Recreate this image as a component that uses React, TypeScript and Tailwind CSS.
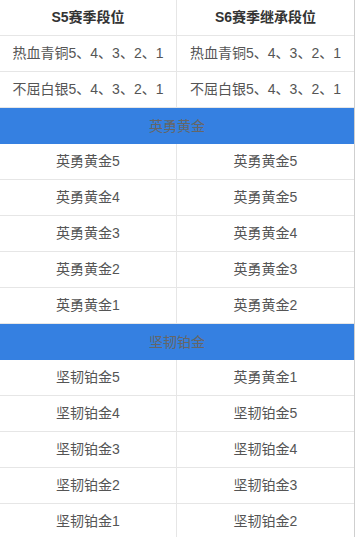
const font = { fontFamily: '"Liberation Sans", "Noto Sans CJK SC", sans-serif' };

type Row = [string, string] | string;

const rows: Row[] = [
  ['热血青铜5、4、3、2、1', '热血青铜5、4、3、2、1'],
  ['不屈白银5、4、3、2、1', '不屈白银5、4、3、2、1'],
  '英勇黄金',
  ['英勇黄金5', '英勇黄金5'],
  ['英勇黄金4', '英勇黄金5'],
  ['英勇黄金3', '英勇黄金4'],
  ['英勇黄金2', '英勇黄金3'],
  ['英勇黄金1', '英勇黄金2'],
  '坚韧铂金',
  ['坚韧铂金5', '英勇黄金1'],
  ['坚韧铂金4', '坚韧铂金5'],
  ['坚韧铂金3', '坚韧铂金4'],
  ['坚韧铂金2', '坚韧铂金3'],
  ['坚韧铂金1', '坚韧铂金2'],
];

export default function App() {
  return (
    <div className="w-[355px] h-[537px] overflow-hidden bg-white" style={font}>
      <div className="w-[355px] border-r border-[#cfcfcf] text-[14px]">
        {/* Header */}
        <div className="flex h-[36px] border-b border-[#e6e6e6] font-bold text-[#333]">
          <div className="w-[177px] border-r border-[#e6e6e6] flex items-center justify-center">S5赛季段位</div>
          <div className="flex-1 flex items-center justify-center">S6赛季继承段位</div>
        </div>

        {rows.map((row, i) =>
          typeof row === 'string' ? (
            <div key={i} className="h-[36px] bg-[#3580e1] text-[#666] flex items-center justify-center">
              {row}
            </div>
          ) : (
            <div key={i} className="flex h-[36px] border-b border-[#e6e6e6] text-[#555]">
              <div className="w-[177px] border-r border-[#e6e6e6] flex items-center justify-center">{row[0]}</div>
              <div className="flex-1 flex items-center justify-center">{row[1]}</div>
            </div>
          )
        )}
      </div>
    </div>
  );
}
